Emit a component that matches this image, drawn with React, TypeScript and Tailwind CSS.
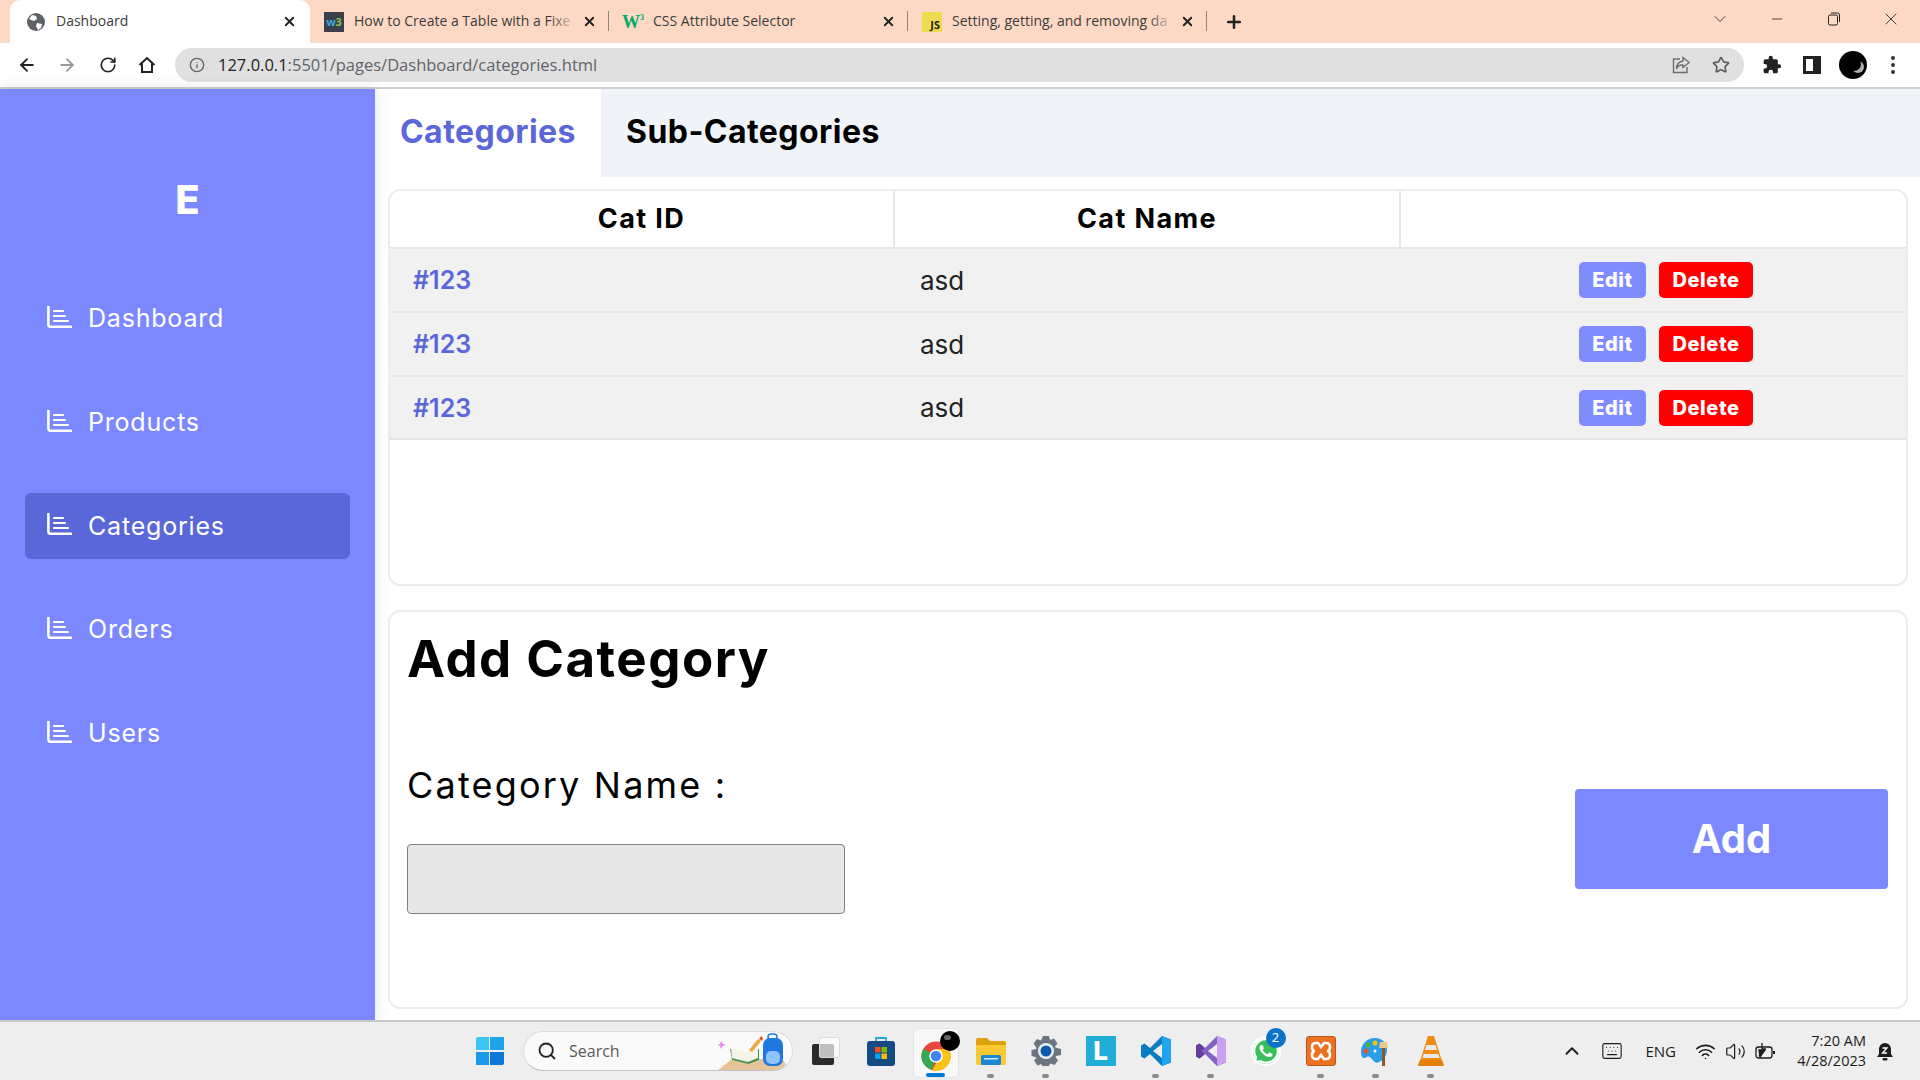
import { ArrowLeft, ArrowRight, ChevronDown, ChevronUp, Info, Keyboard, Minus, Plus, RotateCw, Search, Star, Volume2, Wifi, X } from 'lucide-react'
import { FaWhatsapp } from 'react-icons/fa'

const montserrat = "font-['Inter','Liberation_Sans',sans-serif]"
const uiFont = "font-['Open_Sans','Liberation_Sans',sans-serif]"

const navItems = ['Dashboard', 'Products', 'Categories', 'Orders', 'Users']
const rows = [
  { h: 'h-[64px]', id: '#123', name: 'asd' },
  { h: 'h-[64px]', id: '#123', name: 'asd' },
  { h: 'h-[63px]', id: '#123', name: 'asd' },
]

function ChartIcon() {
  return (
    <svg width="25" height="22" viewBox="0 0 25 22" fill="none" stroke="white" strokeLinecap="round" className="-mt-[4px]">
      <path d="M1.4 1v17.500a2.300 2.300 0 0 0 2.300 2.300H24" strokeWidth="2.600" />
      <path d="M7 5h9M7 10h11M7 15h14" strokeWidth="2.200" />
    </svg>
  )
}

function Globe() {
  return (
    <svg width="20" height="20" viewBox="0 0 20 20">
      <circle cx="10" cy="10" r="9" fill="#5f6368" />
      <path d="M6 3l4 1 1 3-3 2-3-1-2-1zM11 11l5 1-1 4-3 2-2-4z" fill="white" />
    </svg>
  )
}

function W3Icon() {
  return (
    <div className="w-5 h-5 bg-[#3a3f4b] flex items-center justify-center text-[11px] font-bold leading-none">
      <span className="text-[#3fa7e0]">w</span>
      <span className="text-[#8dc63f]">3</span>
    </div>
  )
}

function WIcon() {
  return (
    <div className="w-5 h-5 flex items-center justify-center text-[18px] font-bold leading-none text-[#04aa6d] font-['Liberation_Serif',serif]">
      W<span className="text-[8px] self-start mt-0.5">3</span>
    </div>
  )
}

function JsIcon() {
  return (
    <div className="w-5 h-5 bg-[#f0db4f] flex items-end justify-end pr-0.5 text-[11px] font-bold leading-[14px] text-[#222]">JS</div>
  )
}

interface TabProps {
  title: string
  icon: React.ReactNode
  active?: boolean
  fade?: boolean
}

function ChromeTab({ title, icon, active, fade }: TabProps) {
  return (
    <div className={active ? 'w-[300px] h-[43px] bg-white rounded-t-[10px] flex items-center pl-[16px] pr-[13px]' : 'w-[299px] h-[43px] flex items-center pl-[14px] pr-[12px] relative'}>
      {icon}
      <div className={`flex-1 ml-[10px] -mt-[2px] text-[14px] text-[#3c3c3c] whitespace-nowrap ${uiFont}`}>
        {title}
      </div>
      {fade && <div className="w-[26px] h-[24px] -ml-[26px] bg-gradient-to-r from-transparent to-[#fdd9c5]" />}
      <X size={15} strokeWidth={3} className="ml-[6px] text-[#222]" />
      {!active && <div className="absolute right-0 top-[11px] h-[20px] w-px bg-[#8f8580]" />}
    </div>
  )
}

function BrowserChrome() {
  return (
    <div className="shrink-0">
      <div className="h-[43px] bg-[#fdd9c5] flex items-center pl-[10px]">
        <ChromeTab title="Dashboard" icon={<Globe />} active />
        <ChromeTab title="How to Create a Table with a Fixe" icon={<W3Icon />} fade />
        <ChromeTab title="CSS Attribute Selector" icon={<WIcon />} />
        <ChromeTab title="Setting, getting, and removing da" icon={<JsIcon />} fade />
        <Plus size={20} strokeWidth={3} className="ml-[17px] text-[#222]" />
        <div className="flex items-center ml-auto pb-[5px]">
          <ChevronDown size={20} strokeWidth={1} className="text-[#222]" />
          <Minus size={16} strokeWidth={1.2} className="ml-[39px] text-[#222]" />
          <svg width="14" height="14" viewBox="0 0 14 14" fill="none" stroke="#222" className="ml-[42px]">
            <rect x="1.500" y="3" width="9" height="10" rx="1.500" />
            <path d="M4 1h6.500a2 2 0 0 1 2 2v7" />
          </svg>
          <X size={20} strokeWidth={1} className="ml-[40px] mr-[19px] text-[#222]" />
        </div>
      </div>
      <div className="h-[46px] bg-white border-b-2 border-[#d0d0d0] flex items-center pl-[17px]">
        <ArrowLeft size={20} strokeWidth={2.2} className="text-[#222]" />
        <ArrowRight size={20} strokeWidth={2.2} className="ml-[20px] text-[#9a9a9a]" />
        <RotateCw size={18} strokeWidth={2.2} className="ml-[22px] text-[#222]" />
        <svg width="20" height="20" viewBox="0 0 20 20" fill="none" stroke="#222" strokeWidth="2" className="ml-[20px]">
          <path d="M2.500 10 10 3l7.500 7M5 8.500V17h10V8.500" />
        </svg>
        <div className="ml-[18px] w-[1569px] h-[34px] bg-[#e0e0e0] rounded-full flex items-center pl-[14px] pr-[13px]">
          <Info size={16} className="text-[#5f6368]" />
          <div className={`ml-[13px] text-[16.5px] leading-none text-[#5f6368] ${uiFont}`}>
            <span className="text-[#222]">127.0.0.1</span>:5501/pages/Dashboard/categories.html
          </div>
          <svg width="20" height="20" viewBox="0 0 20 20" fill="none" stroke="#6f6f6f" strokeWidth="1.400" className="ml-auto">
            <path d="M9 4H2.500v13.500H16V12" />
            <path d="M12 2.500 18 7.500l-6 5V10q-5-.5-6.500 4 0-7 6.500-8z" />
          </svg>
          <Star size={18} strokeWidth={2.2} className="ml-[21px] mr-[1px] text-[#5f5f5f]" />
        </div>
        <svg width="20" height="20" viewBox="0 0 24 24" fill="#222" className="ml-[18px]">
          <path d="M20.500 11H19V7a2 2 0 0 0-2-2h-4V3.500a2.500 2.500 0 0 0-5 0V5H4a2 2 0 0 0-2 2v3.800h1.500a2.700 2.700 0 0 1 0 5.400H2V20a2 2 0 0 0 2 2h3.800v-1.500a2.700 2.700 0 0 1 5.400 0V22H17a2 2 0 0 0 2-2v-4h1.500a2.500 2.500 0 0 0 0-5z" />
        </svg>
        <div className="ml-[21px] w-[18px] h-[18px] border-[3px] border-[#222] border-r-[8px]" />
        <div className="ml-[18px] w-[28px] h-[28px] rounded-full bg-black relative overflow-hidden">
          <div className="absolute right-[3px] top-[10px] w-[12px] h-[12px] rounded-full bg-[#b0b0b0]" />
          <div className="absolute right-[6px] top-[6px] w-[14px] h-[14px] rounded-full bg-black" />
        </div>
        <div className="ml-[24px] flex flex-col gap-[3px]">
          <div className="w-1 h-1 rounded-full bg-[#333]" />
          <div className="w-1 h-1 rounded-full bg-[#333]" />
          <div className="w-1 h-1 rounded-full bg-[#333]" />
        </div>
      </div>
    </div>
  )
}

function Sidebar() {
  return (
    <aside className={`w-[375px] shrink-0 bg-[#7b88ff] px-[25px] shadow-[0_0_14px_rgba(0,0,0,0.12)] z-10 ${montserrat}`}>
      <div className="h-[197px] pt-[25px] flex items-center justify-center text-white text-[40px] font-extrabold">E</div>
      {navItems.map((item) => (
        <div
          key={item}
          className={`h-[66px] mb-[37.7px] rounded-[6px] flex items-center pl-[22px] gap-[16px] text-white text-[25px] tracking-[0.8px] ${item === 'Categories' ? 'bg-[#5a67d8]' : ''}`}
        >
          <ChartIcon />
          {item}
        </div>
      ))}
    </aside>
  )
}

function CategoryTable() {
  return (
    <div className="h-[397px] bg-white border-2 border-[#ececec] rounded-[12px] overflow-hidden">
      <div className="grid grid-cols-[505px_506px_1fr] h-[58px] border-b-2 border-[#e6e6e6] text-[27px] font-bold tracking-[1.4px] text-black text-center">
        <div className="flex items-center justify-center border-r-2 border-[#e6e6e6]">Cat ID</div>
        <div className="flex items-center justify-center border-r-2 border-[#e6e6e6]">Cat Name</div>
        <div />
      </div>
      {rows.map((row, i) => (
        <div key={i} className={`grid grid-cols-[505px_506px_1fr] ${row.h} bg-[#f1f1f1] border-b-2 border-[#e6e6e6] items-center`}>
          <div className="pl-[23px] pt-[2px] text-[25px] font-semibold text-[#5a67d8]">{row.id}</div>
          <div className="pl-[25px] text-[26px] text-[#222]">{row.name}</div>
          <div className="pl-[25px] flex justify-center gap-[13px]">
            <button className="w-[67px] h-[36px] bg-[#7f8cff] rounded-[5px] text-white text-[20px] font-extrabold tracking-[0.6px]">Edit</button>
            <button className="w-[94px] h-[36px] bg-[#ff0000] rounded-[5px] text-white text-[20px] font-extrabold tracking-[0.6px]">Delete</button>
          </div>
        </div>
      ))}
    </div>
  )
}

function AddCategory() {
  return (
    <div className="h-[399px] mt-[24px] bg-white border-2 border-[#ececec] rounded-[12px] px-[17px] flex justify-between items-start">
      <div>
        <h1 className="mt-[17px] h-[60px] flex items-center text-[51px] font-bold tracking-[1.5px] text-black whitespace-nowrap">Add Category</h1>
        <div className="mt-[74px] h-[44px] flex items-center text-[36px] tracking-[2.2px] text-black whitespace-nowrap">Category Name :</div>
        <input className="block mt-[37px] w-[438px] h-[70px] bg-[#e8e8e8] border border-[#808080] rounded-[4px]" />
      </div>
      <button className="mt-[177px] mr-[1px] w-[313px] h-[100px] bg-[#7b88ff] rounded-[4px] text-white text-[40px] font-bold">Add</button>
    </div>
  )
}

function Main() {
  return (
    <main className={`flex-1 min-w-0 bg-white ${montserrat}`}>
      <div className="h-[88px] bg-[#f0f4f9] flex items-stretch text-[32px] font-bold tracking-[0.45px]">
        <div className="w-[226px] pb-[2px] bg-white flex items-center justify-center text-[#5a67d8]">Categories</div>
        <div className="pl-[25px] pb-[2px] flex items-center text-black">Sub-Categories</div>
      </div>
      <div className="pt-[12px] pl-[13px] pr-[12px]">
        <CategoryTable />
        <AddCategory />
      </div>
    </main>
  )
}

function StartIcon() {
  return (
    <div className="w-[28px] h-[28px] grid grid-cols-2 gap-[1.5px]">
      <div className="bg-[#3cc4f5] rounded-tl-[2px]" />
      <div className="bg-[#1fa3ea]" />
      <div className="bg-[#1a9ae8]" />
      <div className="bg-[#0b78d8] rounded-br-[2px]" />
    </div>
  )
}

function SearchBox() {
  return (
    <div className="ml-[6px] w-[270px] h-[40px] bg-[#fafafa] border border-[#dcdcdc] border-b-[#c4c4c4] rounded-full flex items-center pl-[13px] relative overflow-hidden">
      <Search size={20} strokeWidth={2.2} className="text-[#222]" />
      <span className={`ml-[12px] text-[16px] text-[#5a5a5a] ${uiFont}`}>Search</span>
      <svg width="68" height="38" viewBox="0 0 68 38" className="absolute right-[6px] top-0">
        <path d="M0 38 14 27h50l4 5q-4 6-10 6z" fill="#e6c59a" />
        <path d="M12 17l18 4 0 11-16-4z" fill="#4f9a5a" />
        <path d="M30 21l11-4v11l-11 4z" fill="#3f8a4c" />
        <path d="M13 16l17 4 10-4v10l-10 4-16-4z" fill="#f4f4ea" />
        <path d="M31 18l9-11 3 2-9 11z" fill="#f2a33c" />
        <path d="M41 7l2-3 2 2-1 3z" fill="#e5532d" />
        <rect x="45" y="6" width="20" height="28" rx="7" fill="#1f78e0" />
        <rect x="50" y="2" width="9" height="6" rx="3" fill="none" stroke="#1f78e0" strokeWidth="1.500" />
        <rect x="48" y="19" width="14" height="13" rx="5" fill="#8fc2ff" />
        <path d="M3 9l2 3 3 1-3 1-2 3-1-3-3-1 3-1z" fill="#e58bf0" />
      </svg>
    </div>
  )
}

function TaskIcon({ children, dot, active }: { children: React.ReactNode; dot?: boolean; active?: boolean }) {
  return (
    <div className="w-[55px] h-[58px] flex items-center justify-center relative">
      {active && <div className="absolute left-[5px] top-[6px] w-[46px] h-[50px] rounded-[5px] bg-[#f8f8f8] border border-[#e4e4e4]" />}
      <div className="relative">{children}</div>
      {dot && <div className="absolute bottom-[2px] left-[24px] w-[7px] h-[4px] rounded-full bg-[#8a8a8a]" />}
      {active && <div className="absolute bottom-[3px] left-[18px] w-[19px] h-[4px] rounded-full bg-[#0078d4]" />}
    </div>
  )
}

function Taskbar() {
  return (
    <footer className="h-[60px] shrink-0 bg-[#eeeeee] border-t-2 border-[#c8c8c8] flex items-center relative z-20">
      <div className="pl-[462px] flex items-center">
        <div className="w-[55px] flex justify-center"><StartIcon /></div>
        <SearchBox />
        <div className="w-[5px]" />
        <TaskIcon>
          <div className="w-[28px] h-[28px] relative">
            <div className="absolute left-0 bottom-0 w-[22px] h-[21px] rounded-[2px] bg-[#2b2b2b]" />
            <div className="absolute right-0 top-0 w-[21px] h-[21px] rounded-[2px] bg-white/70 border border-[#dcdcdc]" />
          </div>
        </TaskIcon>
        <TaskIcon>
          <svg width="28" height="30" viewBox="0 0 28 30">
            <path d="M9 6V2h10v4" fill="none" stroke="#29a8e0" strokeWidth="1.800" />
            <rect y="5" width="28" height="25" rx="3" fill="#164a83" />
            <rect x="8" y="11" width="5.500" height="5.500" fill="#f25022" />
            <rect x="14.500" y="11" width="5.500" height="5.500" fill="#7fba00" />
            <rect x="8" y="17.500" width="5.500" height="5.500" fill="#00a4ef" />
            <rect x="14.500" y="17.500" width="5.500" height="5.500" fill="#ffb900" />
          </svg>
        </TaskIcon>
        <TaskIcon active>
          <div className="w-[40px] h-[40px] relative">
            <svg width="30" height="30" viewBox="0 0 30 30" className="absolute left-[5px] bottom-0">
              <circle cx="15" cy="15" r="14.500" fill="#e8453c" />
              <path d="M15 15 2.400 7.700A14.500 14.500 0 0 0 11 29z" fill="#34a853" />
              <path d="M15 8h12.600A14.500 14.500 0 0 1 11 29.400L18 17z" fill="#fbc116" />
              <circle cx="15" cy="15" r="6.800" fill="white" />
              <circle cx="15" cy="15" r="5.300" fill="#4285f4" />
            </svg>
            <div className="absolute -right-[4px] top-0 w-[20px] h-[20px] rounded-full bg-black">
              <div className="absolute left-[4px] top-[4px] w-[7px] h-[5px] rounded-full bg-[#666]" />
            </div>
          </div>
        </TaskIcon>
        <TaskIcon dot>
          <svg width="30" height="28" viewBox="0 0 30 28">
            <path d="M0 3a2 2 0 0 1 2-2h9l3 3h14a2 2 0 0 1 2 2v4H0z" fill="#dda20d" />
            <path d="M0 8h30v18a2 2 0 0 1-2 2H2a2 2 0 0 1-2-2z" fill="#fcc935" />
            <rect x="5" y="18" width="20" height="10" rx="1.500" fill="#1a87d6" />
            <rect x="8" y="21" width="14" height="1.500" fill="#cfe8fa" />
          </svg>
        </TaskIcon>
        <TaskIcon dot>
          <svg width="30" height="30" viewBox="0 0 30 30">
            <path d="M12 0h6l1 4 4-1.500 3.500 5-2.500 3 0 0 .5 1 5.500 1.500v6l-5 1-.5 1 2.500 3.500-3.500 4.500-4-1.500-1 1-1 3.500h-6l-1-4-4 1.500-3.500-5 2.500-3-5-1.500v-6l4.500-1 .5-1L2.500 7.500 6 3l4 1.500z" fill="#6d7680" />
            <circle cx="15" cy="15" r="8" fill="#e6eef5" />
            <circle cx="15" cy="15" r="5.500" fill="#0f5aa8" />
          </svg>
        </TaskIcon>
        <TaskIcon>
          <div className="w-[30px] h-[30px] bg-[#20add8] flex items-center justify-center relative overflow-hidden">
            <div className={`text-white text-[26px] font-extrabold leading-none ${montserrat}`}>L</div>
          </div>
        </TaskIcon>
        <TaskIcon dot>
          <svg width="30" height="30" viewBox="0 0 30 30">
            <path d="M21 0 9 12 3.500 7.500 0 9.500v11L3.500 22.500 9 18l12 12 9-3.500V3.500zM21 8v14l-9-7z" fill="#0a7cc4" fillRule="evenodd" />
            <path d="M21 0l9 3.500v23L21 30z" fill="#22a3ef" />
          </svg>
        </TaskIcon>
        <TaskIcon dot>
          <svg width="30" height="30" viewBox="0 0 30 30">
            <path d="M21 0 9 12 3.500 7.500 0 9.500v11L3.500 22.500 9 18l12 12 9-3.500V3.500zM21 8v14l-9-7z" fill="#8661c5" fillRule="evenodd" />
            <path d="M21 0l9 3.500v23L21 30z" fill="#c9a0f2" />
            <path d="M0 9.500 3.500 7.500 9 12l-4 3 4 3-5.500 4.500L0 20.500z" fill="#643b9f" />
          </svg>
        </TaskIcon>
        <TaskIcon>
          <div className="w-[30px] h-[30px] rounded-full bg-[#36c05a] border-2 border-white flex items-center justify-center relative">
            <FaWhatsapp size={30} className="text-white" />
            <div className="absolute -right-[7px] -top-[10px] w-[20px] h-[20px] rounded-full bg-[#0a73c9] text-white text-[13px] flex items-center justify-center">2</div>
          </div>
        </TaskIcon>
        <TaskIcon dot>
          <div className="w-[30px] h-[30px] rounded-[3px] bg-[#ee7122] border border-[#b9561b] flex items-center justify-center">
            <svg width="22" height="20" viewBox="0 0 22 20" fill="none" stroke="white" strokeWidth="2.600">
              <path d="M6 2h2l3 4 3-4h2q4 0 4 4t-3 4q3 0 3 4t-4 4h-2l-3-4-3 4H6q-4 0-4-4t3-4q-3 0-3-4t4-4z" />
            </svg>
          </div>
        </TaskIcon>
        <TaskIcon dot>
          <svg width="30" height="30" viewBox="0 0 30 30">
            <path d="M14 2C6 2 0 8 0 16c0 4 2 7 4 6s3-3 6 0 4 6 8 4 8-6 8-12S22 2 14 2z" fill="#2a9ee8" />
            <circle cx="14" cy="7" r="2.500" fill="#f4c20d" />
            <circle cx="7" cy="9" r="2.500" fill="#4caf50" />
            <circle cx="5" cy="15" r="2.500" fill="#e5532d" />
            <circle cx="14" cy="15" r="1.500" fill="#fff" />
            <rect x="21" y="11" width="3" height="19" fill="#8a5a2b" />
            <path d="M19 6h7l1 6h-9z" fill="#e8c890" />
          </svg>
        </TaskIcon>
        <TaskIcon dot>
          <svg width="26" height="30" viewBox="0 0 26 30">
            <path d="M10 0h6l8 25H2z" fill="#f08a12" />
            <path d="M8.500 9h9l1.600 5H6.900zM5.700 18h14.600l1.300 4H4.400z" fill="#e9e9e9" />
            <path d="M2 24h22l2 5a1 1 0 0 1-1 1H1a1 1 0 0 1-1-1z" fill="#e67e0c" />
          </svg>
        </TaskIcon>
      </div>
      <div className={`ml-auto flex items-center text-[#1c1c1c] ${uiFont}`}>
        <ChevronUp size={22} strokeWidth={2} />
        <Keyboard size={22} strokeWidth={1.2} className="ml-[18px]" />
        <div className="ml-[22px] text-[15px]">ENG</div>
        <Wifi size={21} strokeWidth={1.8} className="ml-[19px]" />
        <Volume2 size={21} strokeWidth={1.4} className="ml-[9px]" />
        <svg width="21" height="18" viewBox="0 0 21 18" fill="none" stroke="#1c1c1c" strokeWidth="1.300" className="ml-[9px]">
          <rect x="1" y="5" width="16" height="11" rx="2.500" />
          <path d="M4 14l6-7h-3V1" />
          <path d="M4 8h6l-5 7z" fill="#1c1c1c" />
          <path d="M19 9v3" strokeWidth="2" />
        </svg>
        <div className="w-[90px] text-right text-[14.5px] leading-[20px]">
          <div>7:20 AM</div>
          <div>4/28/2023</div>
        </div>
        <svg width="17" height="20" viewBox="0 0 17 20" className="ml-[11px] mr-[26px]">
          <path d="M8 2a6 6 0 0 0-6 6v5l-2 3h16l-2-3V8a6 6 0 0 0-6-6z" fill="#1c1c1c" />
          <rect x="5.500" y="17" width="5" height="2.500" rx="1" fill="#1c1c1c" />
          <path d="M5.500 7h4.500l-4.500 5h4.500" stroke="white" strokeWidth="1.300" fill="none" />
        </svg>
      </div>
    </footer>
  )
}

export default function App() {
  return (
    <div className="w-[1920px] h-[1080px] overflow-hidden flex flex-col bg-white">
      <BrowserChrome />
      <div className="flex-1 flex min-h-0">
        <Sidebar />
        <Main />
      </div>
      <Taskbar />
    </div>
  )
}
